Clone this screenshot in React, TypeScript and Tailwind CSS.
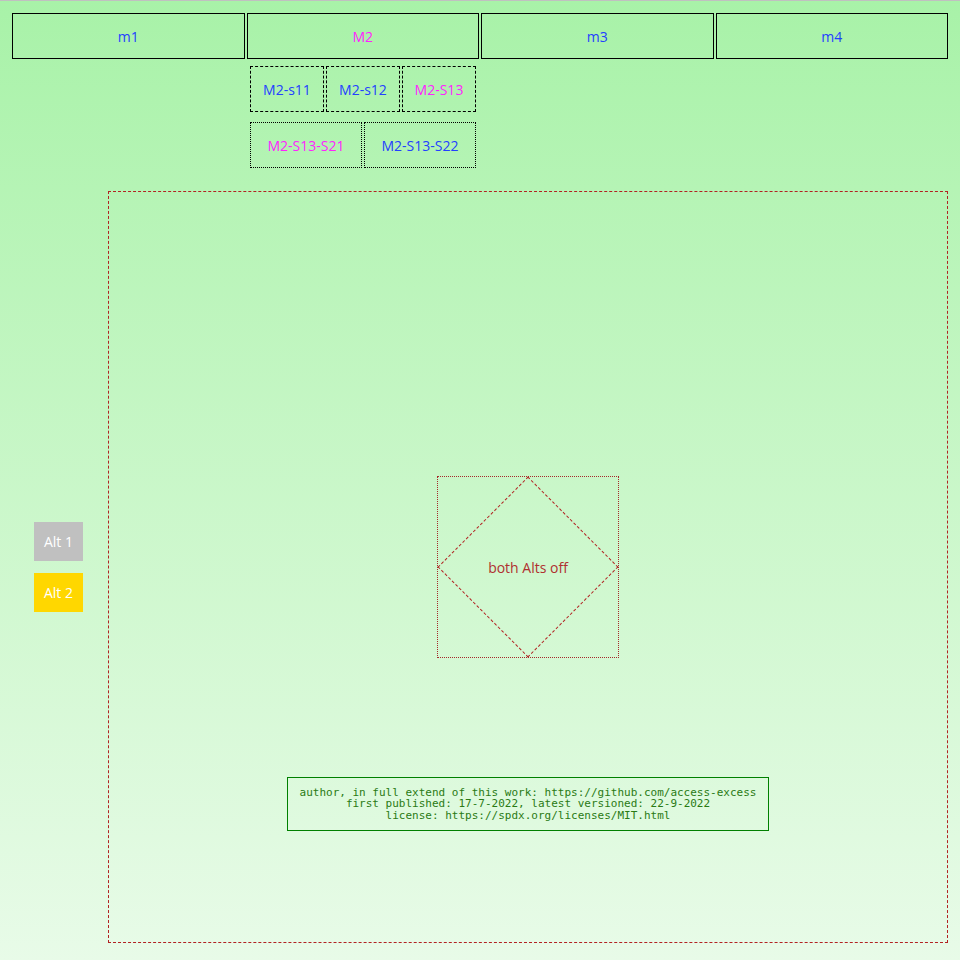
import React from "react";

const font = { fontFamily: '"Open Sans", "Noto Sans", sans-serif' };

export default function App() {
  const menus = [
    { t: "m1", c: "text-[#2340ff]" },
    { t: "M2", c: "text-[#ff22ff]" },
    { t: "m3", c: "text-[#2340ff]" },
    { t: "m4", c: "text-[#2340ff]" },
  ];
  return (
    <div
      className="w-[960px] h-[960px] border-t border-[#c0c0c0] bg-gradient-to-b from-[#a8f2a8] to-[#e8fbe8] overflow-hidden text-[14px]"
      style={font}
    >
      <div className="flex gap-[2px] pl-[12px] pt-[12px]">
        {menus.map((m) => (
          <div
            key={m.t}
            className={`w-[232.5px] h-[46px] border border-black flex items-center justify-center ${m.c}`}
          >
            {m.t}
          </div>
        ))}
      </div>
      <div className="ml-[250px] mt-[7px] flex gap-[2px]">
        <div className="w-[74px] h-[46px] border border-dashed border-black flex items-center justify-center text-[#2340ff]">M2-s11</div>
        <div className="w-[74px] h-[46px] border border-dashed border-black flex items-center justify-center text-[#2340ff]">M2-s12</div>
        <div className="w-[74px] h-[46px] border border-dashed border-black flex items-center justify-center text-[#ff22ff]">M2-S13</div>
      </div>
      <div className="ml-[250px] mt-[10px] flex gap-[2px]">
        <div className="w-[112px] h-[46px] border border-dotted border-black flex items-center justify-center text-[#ff22ff]">M2-S13-S21</div>
        <div className="w-[112px] h-[46px] border border-dotted border-black flex items-center justify-center text-[#2340ff]">M2-S13-S22</div>
      </div>
      <div className="mt-[23px] flex">
        <div className="w-[108px] flex flex-col justify-center gap-[12px] pl-[34px]">
          <div className="w-[49px] h-[39px] bg-[#c0c0c0] text-white flex items-center justify-center">Alt 1</div>
          <div className="w-[49px] h-[39px] bg-[#ffd700] text-white flex items-center justify-center">Alt 2</div>
        </div>
        <div className="relative w-[840px] h-[752px] border border-dashed border-[#b22222] flex items-center justify-center">
          <div className="relative w-[182px] h-[182px] border border-dotted border-[#a52a2a] flex items-center justify-center">
            <div className="absolute left-1/2 top-1/2 w-[128px] h-[128px] -translate-x-1/2 -translate-y-1/2 rotate-45 border border-dashed border-[#b22222]" />
            <span className="relative text-[#b03030] text-[14px]">both Alts off</span>
          </div>
          <div
            className="absolute left-1/2 -translate-x-1/2 bottom-[111px] w-[482px] h-[54px] border border-[#008000] flex flex-col items-center justify-center text-[11px] leading-[11.5px] text-[#2a7a14]"
            style={{ fontFamily: '"DejaVu Sans Mono", "Liberation Mono", monospace' }}
          >
            <div>author, in full extend of this work: https://github.com/access-excess</div>
            <div>first published: 17-7-2022, latest versioned: 22-9-2022</div>
            <div>license: https://spdx.org/licenses/MIT.html</div>
          </div>
        </div>
      </div>
    </div>
  );
}
